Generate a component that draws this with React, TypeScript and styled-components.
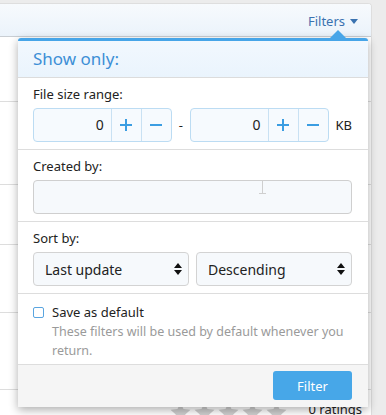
import styled, { createGlobalStyle } from 'styled-components';

const GlobalStyle = createGlobalStyle`
  html, body {
    margin: 0;
    padding: 0;
    background: #ececec;
  }
  body {
    font-family: 'Noto Sans', 'Open Sans', sans-serif;
    color: #222;
  }
  * {
    box-sizing: border-box;
  }
`;

const rowHeights = [65, 83, 60, 68, 77, 40];

const StepButton = ({ sign }: { sign: '+' | '-' }) => (
  <Step>
    <svg width="12" height="12" viewBox="0 0 12 12">
      <path d="M0 6h12" stroke="#3b9de2" strokeWidth="2" />
      {sign === '+' && <path d="M6 0v12" stroke="#3b9de2" strokeWidth="2" />}
    </svg>
  </Step>
);

const SizeInput = () => (
  <Spinner>
    <div className="value">0</div>
    <StepButton sign="+" />
    <StepButton sign="-" />
  </Spinner>
);

const SelectArrows = () => (
  <svg width="8" height="12" viewBox="0 0 8 12">
    <path d="M0 5L4 0L8 5Z M0 7L4 12L8 7Z" fill="#111" />
  </svg>
);

const Star = () => (
  <svg width="23" height="23" viewBox="0 0 24 24">
    <path
      d="M12 1.5l3.1 6.9 7.4.7-5.6 5 1.7 7.4L12 17.6l-6.6 3.9 1.7-7.4-5.6-5 7.4-.7z"
      fill="#cfcfcf"
    />
  </svg>
);

export default function App() {
  return (
    <Page>
      <GlobalStyle />
      <Card>
        <TopBar>
          <FiltersToggle>
            Filters
            <svg width="8" height="5" viewBox="0 0 8 5">
              <path d="M0 0h8L4 5z" fill="#3a72b0" />
            </svg>
          </FiltersToggle>
        </TopBar>
        {rowHeights.map((h, i) => (
          <ListRow key={i} style={{ height: h }}>
            {i === rowHeights.length - 1 && (
              <Rating>
                <Stars>
                  <Star />
                  <Star />
                  <Star />
                  <Star />
                  <Star />
                </Stars>
                <span>0 ratings</span>
              </Rating>
            )}
          </ListRow>
        ))}
      </Card>

      <Popup>
        <PopupTitle>Show only:</PopupTitle>

        <Section>
          <Label>File size range:</Label>
          <RangeRow>
            <SizeInput />
            <Dash>-</Dash>
            <SizeInput />
            <Unit>KB</Unit>
          </RangeRow>
        </Section>

        <Section>
          <Label>Created by:</Label>
          <TextField>
            <svg className="cursor" width="7" height="14" viewBox="0 0 7 14">
              <path d="M0 .5h7M0 13.5h7M3.5 .5v13" stroke="#cfcfcf" strokeWidth="1" fill="none" />
            </svg>
          </TextField>
        </Section>

        <Section>
          <Label>Sort by:</Label>
          <SelectRow>
            <Select>
              Last update
              <SelectArrows />
            </Select>
            <Select>
              Descending
              <SelectArrows />
            </Select>
          </SelectRow>
        </Section>

        <Section $pad="9px 15px 4px">
          <CheckRow>
            <Checkbox />
            <span>Save as default</span>
          </CheckRow>
          <Hint>These filters will be used by default whenever you return.</Hint>
        </Section>

        <Footer>
          <PrimaryButton>Filter</PrimaryButton>
        </Footer>
      </Popup>
    </Page>
  );
}

const Page = styled.div`
  position: relative;
  width: 386px;
  height: 415px;
  overflow: hidden;
  background: #ececec;
  padding-top: 3px;
`;

const Card = styled.div`
  width: 372px;
  height: 412px;
  background: #fff;
  border-top: 1px solid #dedede;
  border-right: 1px solid #dedede;
  border-top-right-radius: 4px;
  overflow: hidden;
`;

const TopBar = styled.div`
  height: 33px;
  background: linear-gradient(#f7fafd, #ebf3fb);
  border-bottom: 1px solid #c9ced3;
  display: flex;
  align-items: center;
  justify-content: flex-end;
  padding: 2px 13px 0 0;
`;

const FiltersToggle = styled.div`
  display: flex;
  align-items: center;
  gap: 5px;
  font-size: 13px;
  color: #3a72b0;
`;

const ListRow = styled.div`
  border-bottom: 1px solid #dddddd;
  display: flex;
  align-items: flex-start;
  justify-content: flex-end;
  padding-right: 9px;
`;

const Rating = styled.div`
  display: flex;
  align-items: flex-start;
  gap: 20px;
  font-size: 13px;
  line-height: 18px;
  color: #222;
  padding-top: 10px;
`;

const Stars = styled.div`
  display: flex;
  gap: 1px;
  margin-top: 1px;
`;

const Popup = styled.div`
  position: absolute;
  left: 18px;
  top: 38px;
  width: 350px;
  background: #fff;
  border-top: 3px solid #47a5e8;
  border-radius: 3px 3px 0 0;
  box-shadow: 0 3px 10px rgba(0, 0, 0, 0.32);

  &::before {
    content: '';
    position: absolute;
    top: -11px;
    left: 312px;
    border-left: 8px solid transparent;
    border-right: 8px solid transparent;
    border-bottom: 8px solid #47a5e8;
  }
`;

const PopupTitle = styled.div`
  height: 37px;
  background: linear-gradient(#f2f8fe, #eaf4fd);
  border-bottom: 1px solid #dcdcdc;
  padding: 6px 15px 0;
  font-size: 17px;
  color: #3d8fd6;
`;

const Section = styled.div<{ $pad?: string }>`
  padding: ${(p) => p.$pad || '7px 16px 7px 15px'};
  border-bottom: 1px solid #dddddd;
`;

const Label = styled.div`
  font-size: 13px;
  line-height: 18px;
  margin-bottom: 5px;
`;

const RangeRow = styled.div`
  display: flex;
  align-items: center;
`;

const Spinner = styled.div`
  display: flex;
  width: 140px;
  height: 34px;
  border: 1px solid #bcdcf3;
  border-radius: 4px;
  background: #f6fafe;
  overflow: hidden;

  .value {
    flex: 1;
    text-align: right;
    padding-right: 7px;
    font-size: 14px;
    line-height: 32px;
  }
`;

const Step = styled.div`
  width: 30px;
  border-left: 1px solid #c9e1f3;
  display: flex;
  align-items: center;
  justify-content: center;
`;

const Dash = styled.div`
  width: 18px;
  text-align: center;
  font-size: 13px;
`;

const Unit = styled.div`
  margin-left: 7px;
  font-size: 13px;
`;

const TextField = styled.div`
  position: relative;
  height: 34px;
  border: 1px solid #cfcfcf;
  border-radius: 4px;
  background: #f6f9fc;

  .cursor {
    position: absolute;
    left: 225px;
    top: -1px;
  }
`;

const SelectRow = styled.div`
  display: grid;
  grid-template-columns: 1fr 1fr;
  gap: 7px;
`;

const Select = styled.div`
  height: 34px;
  border: 1px solid #d3d3d3;
  border-radius: 4px;
  background: #f6f9fc;
  display: flex;
  align-items: center;
  justify-content: space-between;
  padding: 0 6px 0 11px;
  font-size: 14px;
  color: #222;
`;

const CheckRow = styled.div`
  display: flex;
  align-items: center;
  gap: 8px;
  font-size: 13px;
  line-height: 18px;
`;

const Checkbox = styled.span`
  width: 11px;
  height: 11px;
  border: 1.5px solid #5aa5e0;
  border-radius: 2px;
  background: #fff;
`;

const Hint = styled.div`
  margin-left: 19px;
  font-size: 12.5px;
  line-height: 19px;
  color: #9a9a9a;
  padding-top: 1px;
  max-width: 300px;
`;

const Footer = styled.div`
  background: #f5f5f5;
  padding: 6px 16px 7px;
  display: flex;
  justify-content: flex-end;
`;

const PrimaryButton = styled.div`
  width: 79px;
  height: 29px;
  border-radius: 3px;
  background: #47a7e8;
  color: #fff;
  font-size: 13px;
  display: flex;
  align-items: center;
  justify-content: center;
`;
